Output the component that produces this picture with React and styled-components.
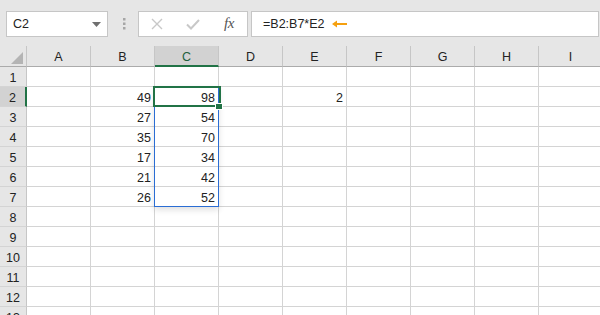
import React from 'react';
import styled, { createGlobalStyle } from 'styled-components';

const Global = createGlobalStyle`
  html, body { margin: 0; padding: 0; background: #ffffff; }
  body { font-family: "Liberation Sans", Arial, sans-serif; }
`;

const Page = styled.div`
  width: 600px;
  height: 315px;
  overflow: hidden;
  background: #ffffff;
  display: flex;
  flex-direction: column;
`;

const Toolbar = styled.div`
  flex: none;
  height: 46px;
  box-sizing: border-box;
  background: #e6e6e6;
  display: flex;
  align-items: flex-start;
  padding: 11px 1px 0 6px;
`;

const Box = styled.div`
  box-sizing: border-box;
  height: 26px;
  background: #ffffff;
  border: 1px solid #c6c6c6;
  display: flex;
  align-items: center;
`;

const NameBox = styled(Box)`
  width: 102px;
  justify-content: space-between;
  padding: 0 6px 0 6px;
  font-size: 12.5px;
  color: #222;
`;

const Separator = styled.div`
  width: 30px;
  height: 26px;
  display: flex;
  align-items: center;
  justify-content: center;
  padding-left: 2px;
  box-sizing: border-box;
`;

const ButtonsBox = styled(Box)`
  width: 110px;
  padding-left: 0;
`;

const Slot = styled.div`
  width: 36px;
  height: 100%;
  display: flex;
  align-items: center;
  justify-content: center;
`;

const Fx = styled.span`
  font-family: "Liberation Serif", "Times New Roman", serif;
  font-style: italic;
  font-size: 15px;
  color: #555;
  letter-spacing: -0.5px;
  margin-top: -2px;
`;

const FormulaBox = styled(Box)`
  flex: 1;
  margin-left: 3px;
  padding-left: 11px;
  font-size: 12.5px;
  color: #222;
  gap: 7px;
`;

const SheetArea = styled.div`
  position: relative;
  flex: 1;
`;

const Grid = styled.div`
  display: grid;
  grid-template-columns: 27px repeat(9, 64px);
  grid-template-rows: 21px;
  grid-auto-rows: 20px;
  font-size: 12.5px;
  color: #222;
`;

const Corner = styled.div`
  box-sizing: border-box;
  background: #e6e6e6;
  border-right: 1px solid #c6c6c6;
  border-bottom: 1px solid #ababab;
  display: flex;
  align-items: flex-end;
  justify-content: flex-end;
  padding: 0 3px 2px 0;
`;

const ColHead = styled.div`
  box-sizing: border-box;
  background: ${p => (p.$selected ? '#d2d2d2' : '#e6e6e6')};
  border-right: 1px solid #c6c6c6;
  border-bottom: ${p => (p.$selected ? '2px solid #217346' : '1px solid #ababab')};
  color: ${p => (p.$selected ? '#1e5f3d' : '#222')};
  display: flex;
  justify-content: center;
  align-items: flex-start;
  padding-top: 5px;
  line-height: 13px;
`;

const RowHead = styled.div`
  box-sizing: border-box;
  background: ${p => (p.$selected ? '#d2d2d2' : '#e6e6e6')};
  border-right: ${p => (p.$selected ? '2px solid #217346' : '1px solid #c6c6c6')};
  border-bottom: 1px solid #d4d4d4;
  display: flex;
  justify-content: center;
  align-items: flex-start;
  padding-top: 5px;
  line-height: 13px;
`;

const Cell = styled.div`
  box-sizing: border-box;
  border-right: 1px solid #d4d4d4;
  border-bottom: 1px solid #d4d4d4;
  display: flex;
  justify-content: flex-end;
  align-items: flex-start;
  padding: 5px 3px 0 0;
  line-height: 13px;
`;

const RangeBox = styled.div`
  position: absolute;
  left: 154px;
  top: 40px;
  width: 65px;
  height: 121px;
  box-sizing: border-box;
  border: 1px solid #2a6dd4;
  box-shadow: 0 3px 6px rgba(0, 0, 0, 0.12);
  pointer-events: none;
`;

const ActiveBox = styled.div`
  position: absolute;
  left: 153px;
  top: 40px;
  width: 68px;
  height: 21px;
  box-sizing: border-box;
  border: 2px solid #217346;
  pointer-events: none;
`;

const FillHandle = styled.div`
  position: absolute;
  left: 216px;
  top: 58px;
  width: 6px;
  height: 5px;
  background: #217346;
  outline: 1px solid #ffffff;
`;

const columns = ['A', 'B', 'C', 'D', 'E', 'F', 'G', 'H', 'I'];
const data = {
  2: { B: 49, C: 98, E: 2 },
  3: { B: 27, C: 54 },
  4: { B: 35, C: 70 },
  5: { B: 17, C: 34 },
  6: { B: 21, C: 42 },
  7: { B: 26, C: 52 },
};
const rows = Array.from({ length: 13 }, (_, i) => i + 1);

export default function App() {
  return (
    <Page>
      <Global />
      <Toolbar>
        <NameBox>
          <span>C2</span>
          <svg width="9" height="5" viewBox="0 0 9 5">
            <path d="M0 0 L9 0 L4.5 5 Z" fill="#6f6f6f" />
          </svg>
        </NameBox>
        <Separator>
          <svg width="3" height="12" viewBox="0 0 3 12">
            <rect x="0" y="0" width="2.5" height="2.5" fill="#a6a6a6" />
            <rect x="0" y="4.5" width="2.5" height="2.5" fill="#a6a6a6" />
            <rect x="0" y="9" width="2.5" height="2.5" fill="#a6a6a6" />
          </svg>
        </Separator>
        <ButtonsBox>
          <Slot>
            <svg width="12" height="12" viewBox="0 0 12 12">
              <path d="M1 1 L11 11 M11 1 L1 11" stroke="#c8c8c8" strokeWidth="1.4" fill="none" />
            </svg>
          </Slot>
          <Slot>
            <svg width="14" height="11" viewBox="0 0 14 11">
              <path d="M1 5.5 L5 9.5 L13 1" stroke="#c8c8c8" strokeWidth="2" fill="none" />
            </svg>
          </Slot>
          <Slot>
            <Fx>fx</Fx>
          </Slot>
        </ButtonsBox>
        <FormulaBox>
          <span>=B2:B7*E2</span>
          <svg width="15" height="8" viewBox="0 0 15 8">
            <path d="M0 4 L5 0.5 L5 3 L15 3 L15 5 L5 5 L5 7.5 Z" fill="#f5a00f" />
          </svg>
        </FormulaBox>
      </Toolbar>
      <SheetArea>
        <Grid>
          <Corner>
            <svg width="12" height="12" viewBox="0 0 12 12">
              <path d="M12 0 L12 12 L0 12 Z" fill="#b4b4b4" />
            </svg>
          </Corner>
          {columns.map(c => (
            <ColHead key={c} $selected={c === 'C'}>{c}</ColHead>
          ))}
          {rows.map(r => (
            <React.Fragment key={r}>
              <RowHead $selected={r === 2}>{r}</RowHead>
              {columns.map(c => (
                <Cell key={c}>{data[r] && data[r][c] !== undefined ? data[r][c] : ''}</Cell>
              ))}
            </React.Fragment>
          ))}
        </Grid>
        <RangeBox />
        <ActiveBox />
        <FillHandle />
      </SheetArea>
    </Page>
  );
}
